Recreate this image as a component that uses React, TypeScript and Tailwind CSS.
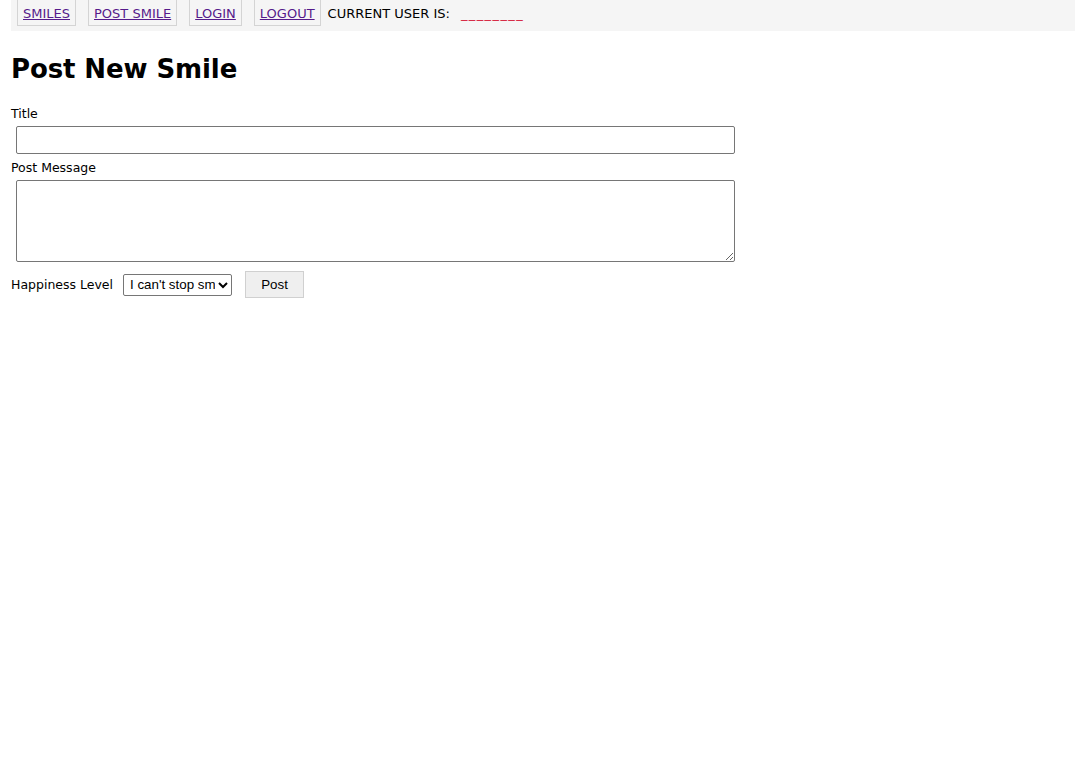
import React from "react";

export default function App() {
  const linkCls =
    "border-x border-b border-[#d4d4d4] h-[26px] px-[5px] pt-[6px] leading-[16px] text-[13px] underline text-[#551a8b]";
  return (
    <div
      className="pl-[11px] text-black bg-white min-h-[781px]"
      style={{ fontFamily: '"DejaVu Sans", Verdana, sans-serif' }}
    >
      <nav className="bg-[#f5f5f5] h-[31px] flex items-start pl-[6px] gap-[12px]">
        <a href="#" className={linkCls}>SMILES</a>
        <a href="#" className={linkCls}>POST SMILE</a>
        <a href="#" className={linkCls}>LOGIN</a>
        <a href="#" className={linkCls}>LOGOUT</a>
        <div className="pt-[6px] leading-[16px] text-[13px] -ml-[5px]">
          CURRENT USER IS:
          <span className="text-[#d6183c] tracking-[1.4px] ml-[11px]">________</span>
        </div>
      </nav>
      <h1 className="mt-[22px] text-[26px] leading-[32px] font-bold tracking-[-0.1px]">Post New Smile</h1>
      <form className="flex flex-col mt-[20px] text-[12.5px]" onSubmit={(e) => e.preventDefault()}>
        <label className="pt-[1px] leading-[16px]">Title</label>
        <input
          type="text"
          className="mt-[4px] ml-[5px] w-[719px] h-[28px] border border-[#767676] rounded-[2px] bg-white"
        />
        <label className="mt-[5px] pt-[1px] leading-[16px]">Post Message</label>
        <textarea className="mt-[4px] ml-[5px] w-[719px] h-[82px] border border-[#767676] rounded-[2px] bg-white resize" />
        <div className="mt-[9px] flex items-center h-[27px]">
          <label className="leading-[16px]">Happiness Level</label>
          <select
            className="ml-[10px] w-[109px] h-[22px] border border-[#767676] rounded-[2px] bg-white text-[13.33px] pl-[2px]"
            style={{ fontFamily: '"Liberation Sans", Arial, sans-serif' }}
            defaultValue="5"
          >
            <option value="5">I can't stop smiling</option>
            <option value="4">Very happy</option>
            <option value="3">Happy</option>
          </select>
          <button
            type="submit"
            className="ml-[13px] w-[59px] h-[27px] bg-[#efefef] border border-[#d0d0d0] text-[13.33px]"
            style={{ fontFamily: '"Liberation Sans", Arial, sans-serif' }}
          >
            Post
          </button>
        </div>
      </form>
    </div>
  );
}
